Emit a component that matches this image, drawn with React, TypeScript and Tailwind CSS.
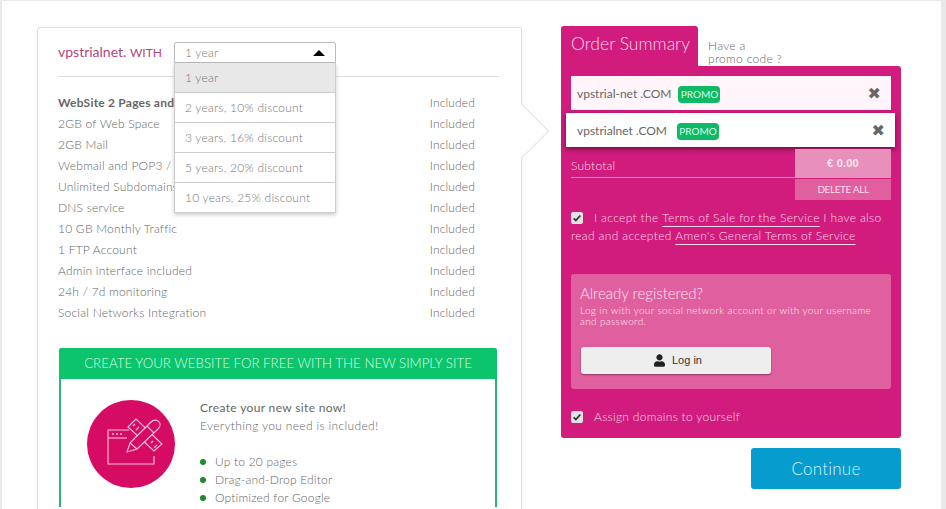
import { FaUser } from 'react-icons/fa';

const features = [
  'WebSite 2 Pages and more',
  '2GB of Web Space',
  '2GB Mail',
  'Webmail and POP3 / IMAP',
  'Unlimited Subdomains',
  'DNS service',
  '10 GB Monthly Traffic',
  '1 FTP Account',
  'Admin interface included',
  '24h / 7d monitoring',
  'Social Networks Integration',
];

const durations = ['2 years, 10% discount', '3 years, 16% discount', '5 years, 20% discount', '10 years, 25% discount'];

function Check() {
  return (
    <span className="flex h-[12px] w-[12px] shrink-0 items-center justify-center rounded-[2px] bg-[#e2e2e2]">
      <svg viewBox="0 0 12 12" className="h-[10px] w-[10px]">
        <path d="M2 6.5 L4.6 9 L10 3" fill="none" stroke="#333" strokeWidth="2.2" />
      </svg>
    </span>
  );
}

function Promo() {
  return <span className="flex h-[17px] w-[42px] items-center justify-center rounded-[4px] bg-[#10b964] text-[10px] tracking-normal font-normal text-[#d9ffe9]">PROMO</span>;
}

function Remove() {
  return <span className="ml-auto font-['DejaVu_Sans',sans-serif] text-[16px] leading-none font-normal tracking-normal text-[#666]">✖</span>;
}

function DesignIcon() {
  return (
    <svg viewBox="0 0 88 88" className="h-[88px] w-[88px] shrink-0">
      <circle cx="44" cy="44" r="44" fill="#d60b63" />
      <g fill="none" stroke="#ffc4dd" strokeWidth="1.1">
        <path d="M42 30 H21 V64 H67 V56" />
        <path d="M21 38 H40" />
        <path d="M25 34 h2 M29 34 h2 M33 34 h2" strokeWidth="1.5" />
        <path d="M41 27 L49 19 L75 44 L67 51 Z" />
        <path d="M48 24 l-2 2 M52 27 l-3 3 M57 32 l-2 2 M61 36 l-3 3 M66 41 l-2 2 M70 45 l-3 3" />
        <path d="M43 43 L64 22 C67 19 71 20 72 22 C74 24 73 27 71 29 L50 49 L40 52 Z" fill="#d60b63" />
        <path d="M43 43 L50 49 M60 26 L67 33" />
      </g>
    </svg>
  );
}

export default function App() {
  return (
    <div className="h-[509px] w-[946px] overflow-hidden bg-[#e9e9e9] pl-[2px] pr-[5px] pt-[1px]">
      <div className="flex h-[508px] overflow-hidden bg-white pl-[35px] pt-[25px] font-['Lato',sans-serif] font-light tracking-[0.22px] text-[#666]">
        {/* left card */}
        <div className="relative mt-px h-[520px] w-[485px] shrink-0 rounded-[3px] border border-[#dedede] px-[20px] pt-[14px] shadow-[0_0_4px_rgba(0,0,0,0.06)]">
          <div className="mr-[2px] flex h-[35px] items-start border-b border-[#dcdcdc]">
            <span className="text-[14px] leading-[20px] font-normal tracking-normal text-[#b0457d]">
              vpstrialnet. <span className="text-[12px]">WITH</span>
            </span>
          </div>

          <div className="absolute left-[136px] top-[14px] z-10 w-[162px] text-[12px]">
            <div className="flex h-[21px] items-center justify-between rounded-t-[2px] border border-[#bbb] bg-white pl-[10px] pr-[10px] text-[#777]">
              1 year
              <span className="h-0 w-0 border-x-[6px] border-b-[6px] border-x-transparent border-b-black" />
            </div>
            <div className="border-x border-b border-[#ccc] bg-white shadow-[0_2px_4px_rgba(0,0,0,0.2)]">
              <div className="flex h-[29px] items-center bg-[#e8e8e8] pl-[10px] text-[#777]">1 year</div>
              {durations.map((d) => (
                <div key={d} className="flex h-[30px] items-center border-t border-[#ccc] pl-[10px] text-[#777]">{d}</div>
              ))}
            </div>
          </div>

          <div className="mt-[15px] text-[12px]">
            {features.map((f, i) => (
              <div key={f} className="flex h-[21px] items-center justify-between pr-[26px]">
                <span className={i === 0 ? 'font-bold text-[#666]' : ''}>{f}</span>
                <span className="tracking-[0.15px]">Included</span>
              </div>
            ))}
          </div>

          <div className="ml-px mt-[25px] w-[438px] rounded-t-[3px] border-x-2 border-[#2fb37a]">
            <div className="-mx-[2px] flex h-[31px] items-center justify-center rounded-t-[3px] bg-[#0bc46c] text-[13.3px] tracking-normal text-[#d9ffe9]">
              CREATE YOUR WEBSITE FOR FREE WITH THE NEW SIMPLY SITE
            </div>
            <div className="flex pl-[26px] pt-[21px]">
              <DesignIcon />
              <div className="-mt-px ml-[25px] text-[12px] leading-[18px] tracking-[0.35px]">
                <div className="font-normal">Create your new site now!</div>
                <div>Everything you need is included!</div>
                <ul className="mt-[18px] tracking-[0.2px]">
                  {['Up to 20 pages', 'Drag-and-Drop Editor', 'Optimized for Google'].map((t) => (
                    <li key={t} className="flex items-center gap-[9px]">
                      <span className="h-[6px] w-[6px] rounded-full bg-[#1f8a2e]" />
                      {t}
                    </li>
                  ))}
                </ul>
              </div>
            </div>
          </div>

          {/* pointer to the order summary */}
          <div className="absolute right-[-20px] top-[83px] h-[40px] w-[40px] rotate-45 border-r border-t border-[#e2e2e2] bg-white" />
        </div>

        {/* order summary */}
        <div className="ml-[39px] w-[340px] shrink-0">
          <div className="flex h-[40px]">
            <div className="w-[137px] rounded-t-[3px] bg-[#d11c7d] pl-[10px] pt-[7px] text-[17.5px] leading-[22px] tracking-normal text-[#ffd9ec]">Order Summary</div>
            <div className="ml-[10px] pt-[13px] text-[12px] leading-[13px] tracking-[0.3px]">Have a<br />promo code ?</div>
          </div>
          <div className="rounded-b-[3px] rounded-tr-[3px] bg-[#d11c7d] px-[10px] pb-[12px] pt-[10px]">
            <div className="flex h-[34px] items-center bg-[#fff5fa] pl-[6px] pr-[10px] pt-[2px] text-[12px] font-normal tracking-normal text-[#666]">
              vpstrial-net .COM
              <span className="ml-[7px]"><Promo /></span>
              <Remove />
            </div>
            <div className="-ml-[5px] -mr-[4px] mt-[3px] flex h-[34px] items-center bg-white pl-[11px] pr-[10px] pt-[2px] text-[12px] font-normal tracking-normal text-[#666] shadow-[0_2px_5px_rgba(0,0,0,0.5)]">
              vpstrialnet .COM
              <span className="ml-[10px]"><Promo /></span>
              <Remove />
            </div>
            <div className="mt-[2px] flex h-[29px] items-end justify-between border-b border-[#f08fc0] text-[12px] text-[#ffd9ec]">
              <span className="pb-[2px]">Subtotal</span>
              <span className="flex h-[28px] w-[96px] items-center justify-center bg-[#e88fbc] font-['Liberation_Sans',sans-serif] text-[11px] font-bold text-[#fbe6f1]">€ 0.00</span>
            </div>
            <div className="ml-auto mt-px flex h-[21px] w-[96px] items-center justify-center bg-[#e0609f] text-[10px] tracking-[-0.4px] font-normal text-[#fde]">DELETE ALL</div>

            <div className="mt-[9px] text-[12px] leading-[18px] tracking-[0.35px] text-[#ffd9ec]">
              <div className="flex items-center whitespace-pre">
                <Check />
                <span className="ml-[11px]">I accept the </span>
                <span className="underline underline-offset-[4px]">Terms of Sale for the Service</span>
                <span> I have also</span>
              </div>
              <div className="flex whitespace-pre">
                <span>read and accepted </span>
                <span className="underline underline-offset-[4px]">Amen's General Terms of Service</span>
              </div>
            </div>

            <div className="mt-[29px] h-[115px] rounded-[3px] bg-[#e0609f] px-[9px] pt-[9px] text-[#ffe3f1]">
              <div className="text-[15px] leading-[20px] tracking-normal">Already registered?</div>
              <p className="mt-[2px] text-[10px] leading-[11px] tracking-[0.35px]">Log in with your social network account or with your username and password.</p>
              <button className="ml-px mt-[20px] flex h-[27px] w-[190px] items-center justify-center gap-[7px] rounded-[3px] bg-[#eee] pl-[4px] font-['Liberation_Sans',sans-serif] text-[11px] font-normal tracking-normal text-[#333] shadow-[0_1px_2px_rgba(0,0,0,0.4)]">
                <FaUser className="h-[13px] w-[11px] text-[#222]" />
                Log in
              </button>
            </div>

            <div className="mt-[19px] flex items-center gap-[11px] text-[12px] tracking-[0.3px] text-[#ffd9ec]">
              <Check />
              Assign domains to yourself
            </div>
          </div>
          <button className="ml-auto mt-[10px] flex h-[41px] w-[150px] items-center justify-center rounded-[3px] bg-[#069ccd] text-[17px] text-[#d5f5ff]">Continue</button>
        </div>
      </div>
    </div>
  );
}
